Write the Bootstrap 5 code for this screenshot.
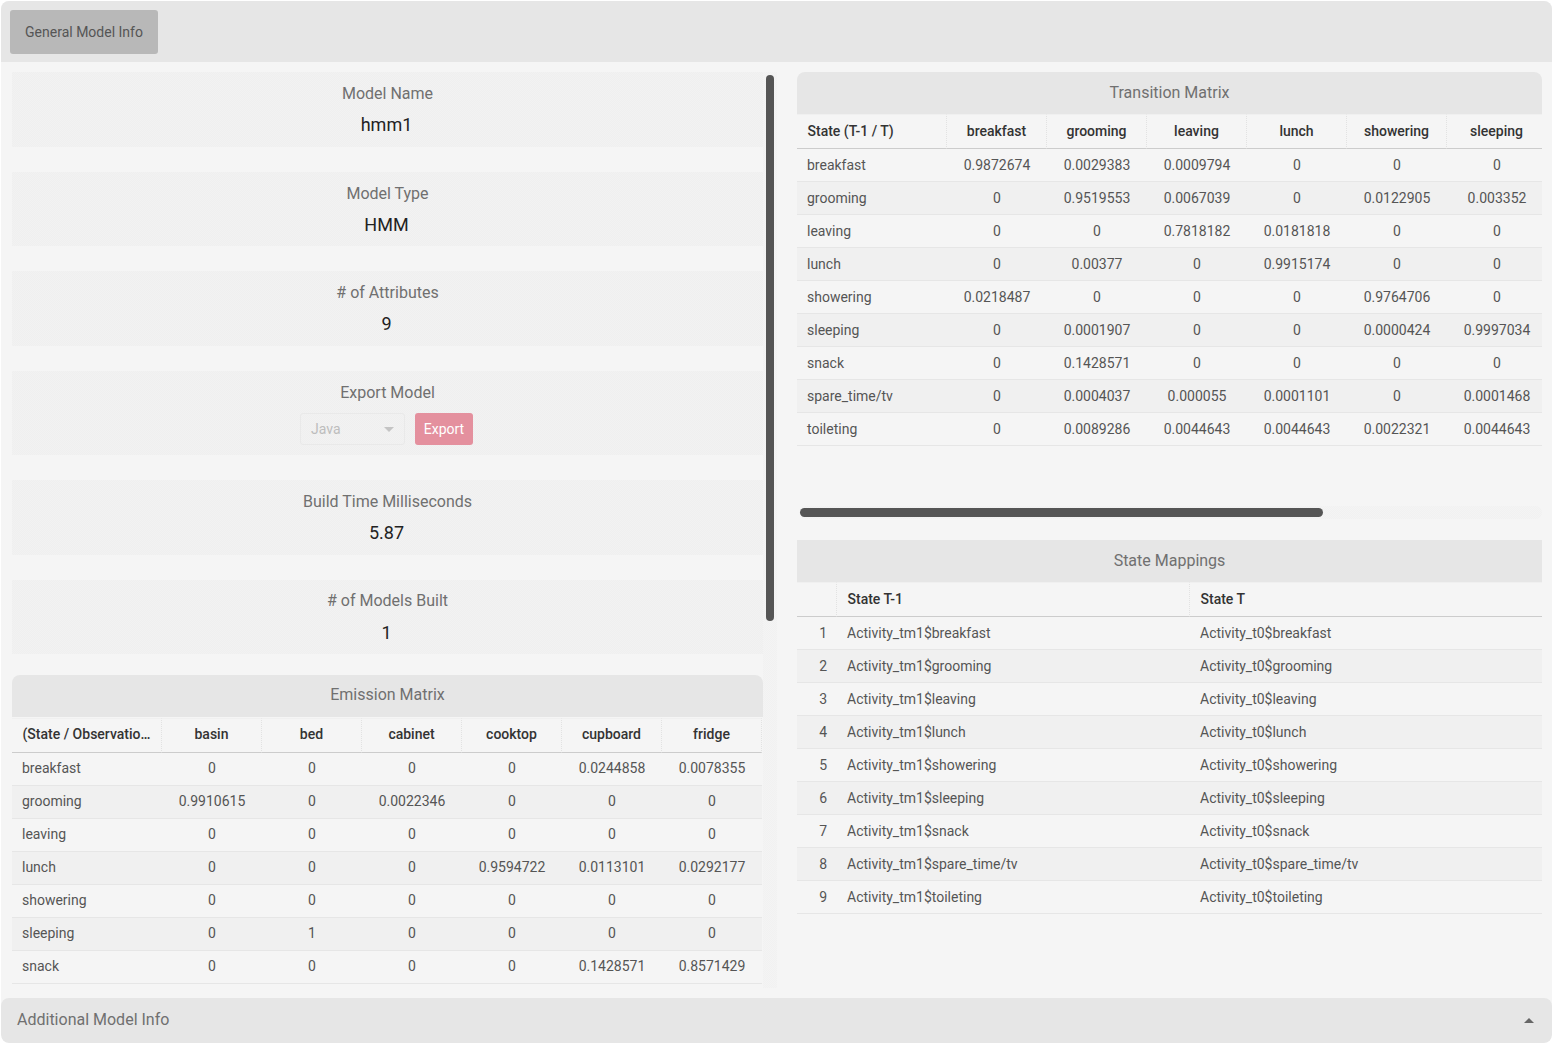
<!DOCTYPE html>
<html lang="en">
<head>
<meta charset="utf-8">
<title>General Model Info</title>
<link href="https://cdn.jsdelivr.net/npm/bootstrap@5.3.0/dist/css/bootstrap.min.css" rel="stylesheet">
<style>
html,body{height:100%;}
body{background:#fff;font-family:Roboto,"Liberation Sans",sans-serif;font-size:14px;color:#555;overflow:hidden;}
.app-shell{height:calc(100vh - 2px);margin:1px 2px 1px 1px;background:#f5f5f5;border-radius:8px;overflow:hidden;}
.top-bar{height:61px;background:#e6e6e6;padding:9px;flex:none;}
.tab-btn{width:148px;height:44px;background:#b8b8b8;color:#555;border:0;border-radius:3px;font-size:14px;padding:0;}
.tab-btn:hover{background:#b8b8b8;color:#555;}
.content-area{min-height:0;padding:10px 0;}
.left-pane{width:777px;flex:none;padding:0 15px 0 11px;overflow:hidden;}
.right-pane{min-width:0;padding:0 10px 0 19px;}
.track-y{position:absolute;top:0;bottom:0;right:1px;width:14px;background:repeating-conic-gradient(#f1f1f1 0 25%,#f4f4f4 0 50%) 0 0/2px 2px;}
.thumb-y{margin:3px 0 0 3px;width:8px;height:546px;background:#555;border-radius:4px;}
.info-tile{background:repeating-conic-gradient(#efefef 0 25%,#f2f2f2 0 50%) 0 0/2px 2px;text-align:center;padding:11px 0 10.67px;margin-bottom:25px;}
.tile-export{padding-bottom:10px;}
.tile-tight{padding-top:10px;}
.tile-tight .tile-label{margin-bottom:10px;}
.tile-label{font-size:16px;line-height:22px;color:#707070;margin-bottom:9px;}
.tile-value{font-size:18px;line-height:22px;color:#222;margin-right:2px;}
.export-row{height:32px;margin-right:2px;}
.fake-select{width:105px;height:32px;border:1px solid #e9e9e9;border-radius:3px;color:#bdbdbd;padding:1px 10px 0;margin-right:10px;}
.fake-caret{width:0;height:0;border-left:5px solid transparent;border-right:5px solid transparent;border-top:5px solid #c4c4c4;}
.export-btn{width:58px;height:32px;background:#e4909e;border:0;border-radius:3px;color:#fff;font-size:14px;padding:1px 0 0;}
.export-btn:disabled{background:#e4909e;color:#fff;opacity:1;}
.matrix-head{height:42px;background:#e6e6e6;color:#707070;font-size:16px;line-height:42px;text-align:center;}
.rounded-head{border-radius:8px 8px 0 0;}
.head-emission{margin:20.67px 0 1px;line-height:40px;}
.matrix-clip{overflow:hidden;}
.matrix-table{table-layout:fixed;border-collapse:separate;border-spacing:0;margin:0;width:750px;}
.map-table{width:745px;}
.matrix-table th{height:35px;padding:0 10px 1px;font-weight:500;color:#333;text-align:center;vertical-align:middle;border-top:1px solid #f0f0f0;border-bottom:1px solid #ccc;border-right:1px dotted #e2e2e2;white-space:nowrap;overflow:hidden;text-overflow:ellipsis;}
.matrix-table td{height:33px;padding:0 10px;color:#555;text-align:center;vertical-align:middle;border-bottom:1px solid #e6e6e6;white-space:nowrap;}
.matrix-table th.cell-left{text-align:left;padding-left:10.5px;}
.matrix-table td.cell-left{text-align:left;}
.matrix-table td.cell-idx{text-align:right;}
.matrix-table tbody tr:nth-child(even) td{background:#f0f0f0;}
.col-name{width:150px;}
.col-num{width:100px;}
.col-idx{width:40px;}
.col-map-a{width:353px;}
.col-map-b{width:352px;}
.track-x{height:13px;margin:60px 0 21px 3px;background:repeating-conic-gradient(#f1f1f1 0 25%,#f4f4f4 0 50%) 0 0/2px 2px;border-radius:6px;padding:2px 0;}
.thumb-x{width:523px;height:9px;background:#555;border-radius:5px;}
.bottom-bar{height:45px;flex:none;background:#e6e6e6;border-radius:8px;padding:0 18px 0 16px;font-size:16px;color:#707070;}
.bar-label{margin-bottom:1px;}
.up-caret{width:0;height:0;border-left:5px solid transparent;border-right:5px solid transparent;border-bottom:5px solid #666;}
</style>
</head>
<body>
<div class="app-shell d-flex flex-column">
  <div class="top-bar"><button type="button" class="btn tab-btn">General Model Info</button></div>
  <div class="content-area d-flex flex-grow-1">
    <div class="left-pane position-relative">
      <div class="info-tile"><div class="tile-label">Model Name</div><div class="tile-value">hmm1</div></div>
      <div class="info-tile"><div class="tile-label">Model Type</div><div class="tile-value">HMM</div></div>
      <div class="info-tile"><div class="tile-label"># of Attributes</div><div class="tile-value">9</div></div>
      <div class="info-tile tile-export">
        <div class="tile-label">Export Model</div>
        <div class="export-row d-flex justify-content-center">
          <div class="fake-select d-flex align-items-center justify-content-between"><span>Java</span><span class="fake-caret"></span></div>
          <button type="button" class="btn export-btn" disabled>Export</button>
        </div>
      </div>
      <div class="info-tile"><div class="tile-label">Build Time Milliseconds</div><div class="tile-value">5.87</div></div>
      <div class="info-tile tile-tight mb-0"><div class="tile-label"># of Models Built</div><div class="tile-value">1</div></div>
      <div class="matrix-head rounded-head head-emission">Emission Matrix</div>
      <div class="matrix-clip">
      <table class="table matrix-table">
        <thead><tr><th class="col-name cell-left">(State / Observation)</th><th class="col-num">basin</th><th class="col-num">bed</th><th class="col-num">cabinet</th><th class="col-num">cooktop</th><th class="col-num">cupboard</th><th class="col-num">fridge</th></tr></thead>
        <tbody>
          <tr><td class="cell-left">breakfast</td><td>0</td><td>0</td><td>0</td><td>0</td><td>0.0244858</td><td>0.0078355</td></tr>
          <tr><td class="cell-left">grooming</td><td>0.9910615</td><td>0</td><td>0.0022346</td><td>0</td><td>0</td><td>0</td></tr>
          <tr><td class="cell-left">leaving</td><td>0</td><td>0</td><td>0</td><td>0</td><td>0</td><td>0</td></tr>
          <tr><td class="cell-left">lunch</td><td>0</td><td>0</td><td>0</td><td>0.9594722</td><td>0.0113101</td><td>0.0292177</td></tr>
          <tr><td class="cell-left">showering</td><td>0</td><td>0</td><td>0</td><td>0</td><td>0</td><td>0</td></tr>
          <tr><td class="cell-left">sleeping</td><td>0</td><td>1</td><td>0</td><td>0</td><td>0</td><td>0</td></tr>
          <tr><td class="cell-left">snack</td><td>0</td><td>0</td><td>0</td><td>0</td><td>0.1428571</td><td>0.8571429</td></tr>
        </tbody>
      </table>
      </div>
      <div class="track-y"><div class="thumb-y"></div></div>
    </div>
    <div class="right-pane flex-grow-1">
      <div class="matrix-head rounded-head">Transition Matrix</div>
      <div class="matrix-clip">
      <table class="table matrix-table">
        <thead><tr><th class="col-name cell-left">State (T-1 / T)</th><th class="col-num">breakfast</th><th class="col-num">grooming</th><th class="col-num">leaving</th><th class="col-num">lunch</th><th class="col-num">showering</th><th class="col-num">sleeping</th></tr></thead>
        <tbody>
          <tr><td class="cell-left">breakfast</td><td>0.9872674</td><td>0.0029383</td><td>0.0009794</td><td>0</td><td>0</td><td>0</td></tr>
          <tr><td class="cell-left">grooming</td><td>0</td><td>0.9519553</td><td>0.0067039</td><td>0</td><td>0.0122905</td><td>0.003352</td></tr>
          <tr><td class="cell-left">leaving</td><td>0</td><td>0</td><td>0.7818182</td><td>0.0181818</td><td>0</td><td>0</td></tr>
          <tr><td class="cell-left">lunch</td><td>0</td><td>0.00377</td><td>0</td><td>0.9915174</td><td>0</td><td>0</td></tr>
          <tr><td class="cell-left">showering</td><td>0.0218487</td><td>0</td><td>0</td><td>0</td><td>0.9764706</td><td>0</td></tr>
          <tr><td class="cell-left">sleeping</td><td>0</td><td>0.0001907</td><td>0</td><td>0</td><td>0.0000424</td><td>0.9997034</td></tr>
          <tr><td class="cell-left">snack</td><td>0</td><td>0.1428571</td><td>0</td><td>0</td><td>0</td><td>0</td></tr>
          <tr><td class="cell-left">spare_time/tv</td><td>0</td><td>0.0004037</td><td>0.000055</td><td>0.0001101</td><td>0</td><td>0.0001468</td></tr>
          <tr><td class="cell-left">toileting</td><td>0</td><td>0.0089286</td><td>0.0044643</td><td>0.0044643</td><td>0.0022321</td><td>0.0044643</td></tr>
        </tbody>
      </table>
      </div>
      <div class="track-x"><div class="thumb-x"></div></div>
      <div class="matrix-head">State Mappings</div>
      <table class="table matrix-table map-table">
        <thead><tr><th class="col-idx"></th><th class="col-map-a cell-left">State T-1</th><th class="col-map-b cell-left border-end-0">State T</th></tr></thead>
        <tbody>
          <tr><td class="cell-idx">1</td><td class="cell-left">Activity_tm1$breakfast</td><td class="cell-left">Activity_t0$breakfast</td></tr>
          <tr><td class="cell-idx">2</td><td class="cell-left">Activity_tm1$grooming</td><td class="cell-left">Activity_t0$grooming</td></tr>
          <tr><td class="cell-idx">3</td><td class="cell-left">Activity_tm1$leaving</td><td class="cell-left">Activity_t0$leaving</td></tr>
          <tr><td class="cell-idx">4</td><td class="cell-left">Activity_tm1$lunch</td><td class="cell-left">Activity_t0$lunch</td></tr>
          <tr><td class="cell-idx">5</td><td class="cell-left">Activity_tm1$showering</td><td class="cell-left">Activity_t0$showering</td></tr>
          <tr><td class="cell-idx">6</td><td class="cell-left">Activity_tm1$sleeping</td><td class="cell-left">Activity_t0$sleeping</td></tr>
          <tr><td class="cell-idx">7</td><td class="cell-left">Activity_tm1$snack</td><td class="cell-left">Activity_t0$snack</td></tr>
          <tr><td class="cell-idx">8</td><td class="cell-left">Activity_tm1$spare_time/tv</td><td class="cell-left">Activity_t0$spare_time/tv</td></tr>
          <tr><td class="cell-idx">9</td><td class="cell-left">Activity_tm1$toileting</td><td class="cell-left">Activity_t0$toileting</td></tr>
        </tbody>
      </table>
    </div>
  </div>
  <div class="bottom-bar d-flex align-items-center justify-content-between"><span class="bar-label">Additional Model Info</span><span class="up-caret"></span></div>
</div>
<script src="https://cdn.jsdelivr.net/npm/bootstrap@5.3.0/dist/js/bootstrap.bundle.min.js"></script>
</body>
</html>
